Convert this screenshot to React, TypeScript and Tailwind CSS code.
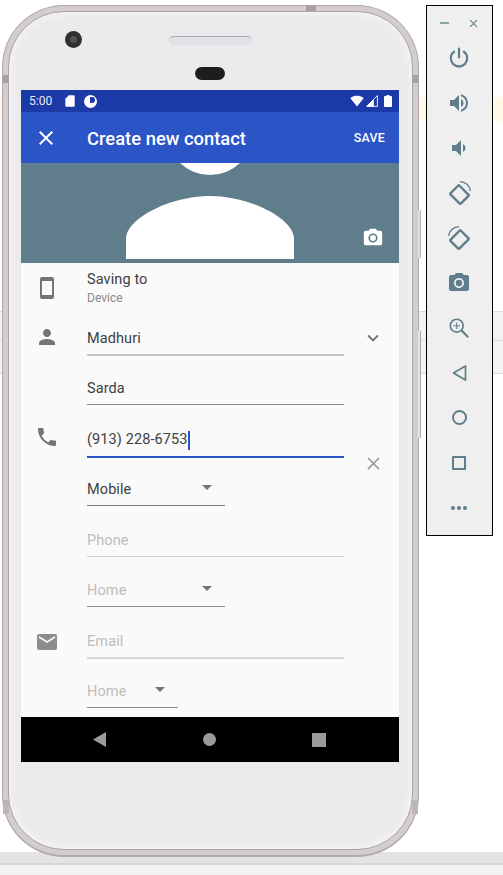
import type { ReactNode } from "react";

const paths = {
  close: "M19 6.41L17.59 5 12 10.59 6.41 5 5 6.41 10.59 12 5 17.59 6.41 19 12 13.41 17.59 19 19 17.59 13.41 12z",
  camera:
    "M9 2L7.17 4H4c-1.1 0-2 .9-2 2v12c0 1.1.9 2 2 2h16c1.1 0 2-.9 2-2V6c0-1.1-.9-2-2-2h-3.17L15 2H9zm3 15c-2.76 0-5-2.24-5-5s2.24-5 5-5 5 2.24 5 5-2.24 5-5 5zm0-8.2a3.2 3.2 0 1 0 0 6.4 3.2 3.2 0 0 0 0-6.4z",
  person: "M12 12c2.21 0 4-1.79 4-4s-1.79-4-4-4-4 1.79-4 4 1.79 4 4 4zm0 2c-2.67 0-8 1.34-8 4v2h16v-2c0-2.66-5.33-4-8-4z",
  phone:
    "M6.62 10.79c1.44 2.83 3.76 5.14 6.59 6.59l2.2-2.2c.27-.27.67-.36 1.02-.24 1.12.37 2.33.57 3.57.57.55 0 1 .45 1 1V20c0 .55-.45 1-1 1-9.39 0-17-7.61-17-17 0-.55.45-1 1-1h3.5c.55 0 1 .45 1 1 0 1.25.2 2.45.57 3.57.11.35.03.74-.25 1.02l-2.2 2.2z",
  email: "M20 4H4c-1.1 0-1.99.9-1.99 2L2 18c0 1.1.9 2 2 2h16c1.1 0 2-.9 2-2V6c0-1.1-.9-2-2-2zm0 4l-8 5-8-5V6l8 5 8-5v2z",
  smartphone: "M17 1.01L7 1c-1.1 0-2 .9-2 2v18c0 1.1.9 2 2 2h10c1.1 0 2-.9 2-2V3c0-1.1-.9-1.99-2-1.99zM17 19H7V5h10v14z",
  expand: "M16.59 8.59L12 13.17 7.41 8.59 6 10l6 6 6-6z",
  volumeUp:
    "M3 9v6h4l5 5V4L7 9H3zm13.5 3c0-1.77-1.02-3.29-2.5-4.03v8.05c1.48-.73 2.5-2.25 2.5-4.02zM14 3.23v2.06c2.89.86 5 3.54 5 6.71s-2.11 5.85-5 6.71v2.06c4.01-.91 7-4.49 7-8.77s-2.99-7.86-7-8.77z",
  volumeDown: "M18.5 12c0-1.77-1.02-3.29-2.5-4.03v8.05c1.48-.73 2.5-2.25 2.5-4.02zM5 9v6h4l5 5V4L9 9H5z",
  wifi: "M12.01 21.49L23.64 7c-.45-.34-4.93-4-11.64-4C5.28 3 .81 6.66.36 7l11.64 14.49.01.01z",
  sd: "M18 2h-8L4.02 8 4 20c0 1.1.9 2 2 2h12c1.1 0 2-.9 2-2V4c0-1.1-.9-2-2-2z",
};

function Icon({ d, className }: { d: string; className?: string }) {
  return (
    <svg viewBox="0 0 24 24" className={className} fill="currentColor">
      <path d={d} />
    </svg>
  );
}

function Caret() {
  return (
    <svg viewBox="0 0 10 5" className="w-[10px] h-[5px] text-[#757575]" fill="currentColor">
      <path d="M0 0h10L5 5z" />
    </svg>
  );
}

type FieldProps = {
  rowClass: string;
  text: string;
  textClass?: string;
  lineClass: string;
  icon?: ReactNode;
  right?: ReactNode;
  caret?: string;
  cursor?: boolean;
};

function Field({ rowClass, text, textClass = "text-[#404040]", lineClass, icon, right, caret, cursor }: FieldProps) {
  return (
    <div className={`flex items-end ${rowClass}`}>
      <div className="w-[66px] pl-[13.5px] shrink-0">{icon}</div>
      <div className="w-[257px] shrink-0">
        <div className={lineClass}>
          <div className={`flex items-center h-[24px] text-[14.5px] tracking-[0.1px] ${cursor ? "mb-[4px]" : "mb-[3px]"}`}>
            <span className={textClass}>{text}</span>
            {cursor && <span className="w-[2px] h-[19px] bg-[#2b54c7] ml-[0.5px]" />}
            {caret && (
              <span className={`ml-auto mb-[6px] flex ${caret}`}>
                <Caret />
              </span>
            )}
          </div>
        </div>
      </div>
      <div className="flex-1 pl-[18px]">{right}</div>
    </div>
  );
}

function PanelButton({ children }: { children: ReactNode }) {
  return <div className="h-[45px] flex items-center justify-center pr-[1px] text-[#607d8b]">{children}</div>;
}

function SidePanel() {
  return (
    <div className="absolute left-[426px] top-[5px] w-[67px] h-[531px] bg-[#efefef] border border-black">
      <div className="flex items-center h-[34px] mb-[-5px] pl-[13px] gap-[18px]">
        <div className="w-[9px] h-[2px] bg-[#90a4ae]" />
        <Icon d={paths.close} className="w-[13px] h-[13px] text-[#607d8b]" />
      </div>
      <div>
        <PanelButton>
          <svg viewBox="0 0 24 24" className="w-[24px] h-[24px]" fill="none" stroke="currentColor" strokeWidth="2.2" strokeLinecap="round">
            <path d="M12 2.5v9" />
            <path d="M7.2 5.6a8.2 8.2 0 1 0 9.6 0" />
          </svg>
        </PanelButton>
        <PanelButton>
          <Icon d={paths.volumeUp} className="w-[24px] h-[24px]" />
        </PanelButton>
        <PanelButton>
          <Icon d={paths.volumeDown} className="w-[24px] h-[24px]" />
        </PanelButton>
        <PanelButton>
          <svg viewBox="0 0 24 24" className="w-[25px] h-[25px]" fill="none" stroke="currentColor">
            <rect x="6" y="7" width="12" height="14" rx="1" strokeWidth="2.3" transform="rotate(-45 12 14)" />
            <path d="M12.5 1.5a10.5 10.5 0 0 1 10 9" strokeWidth="1.3" />
          </svg>
        </PanelButton>
        <PanelButton>
          <svg viewBox="0 0 24 24" className="w-[25px] h-[25px]" fill="none" stroke="currentColor">
            <rect x="6" y="7" width="12" height="14" rx="1" strokeWidth="2.3" transform="rotate(45 12 14)" />
            <path d="M11.5 1.5a10.5 10.5 0 0 0-10 9" strokeWidth="1.3" />
          </svg>
        </PanelButton>
        <PanelButton>
          <Icon d={paths.camera} className="w-[24px] h-[24px]" />
        </PanelButton>
        <PanelButton>
          <svg viewBox="0 0 24 24" className="w-[22px] h-[22px]" fill="none" stroke="currentColor" strokeWidth="1.8">
            <circle cx="9.5" cy="9.5" r="7" />
            <path d="M9.5 6v7M6 9.5h7" strokeWidth="1.2" />
            <path d="M14.8 14.8L22 22" strokeWidth="2.2" />
          </svg>
        </PanelButton>
        <PanelButton>
          <svg viewBox="0 0 24 24" className="w-[24px] h-[24px]" fill="none" stroke="currentColor" strokeWidth="1.7">
            <path d="M18.5 5v14L6.5 12z" strokeLinejoin="round" />
          </svg>
        </PanelButton>
        <PanelButton>
          <div className="w-[15px] h-[15px] rounded-full border-2 border-[#607d8b]" />
        </PanelButton>
        <PanelButton>
          <div className="w-[14px] h-[14px] rounded-[1px] border-2 border-[#607d8b]" />
        </PanelButton>
        <PanelButton>
          <div className="flex gap-[2px]">
            <div className="w-[4px] h-[4px] rounded-full bg-[#607d8b]" />
            <div className="w-[4px] h-[4px] rounded-full bg-[#607d8b]" />
            <div className="w-[4px] h-[4px] rounded-full bg-[#607d8b]" />
          </div>
        </PanelButton>
      </div>
    </div>
  );
}

function StatusBar() {
  return (
    <div className="h-[22px] bg-[#1c39a8] flex items-center pl-[8px] pr-[7px] text-white shrink-0">
      <span className="text-[12px] w-[34px] text-[#e8ebf7]">5:00</span>
      <Icon d={paths.sd} className="w-[14px] h-[14px]" />
      <div className="ml-[7px] w-[13px] h-[13px] rounded-full bg-white flex items-center justify-center">
        <div className="w-[5px] h-[6px] bg-[#1c39a8] rounded-r-[3px] ml-[3px] mb-[3px]" />
      </div>
      <div className="ml-auto flex items-center">
        <svg viewBox="0 2 24 20" className="w-[14px] h-[12px]" fill="white">
          <path d={paths.wifi} />
        </svg>
        <svg viewBox="0 0 20 20" className="w-[12px] h-[12px] ml-[2px]" fill="none">
          <path d="M1 19h18V1z" stroke="white" strokeWidth="1.5" />
          <path d="M1 19h12V7z" fill="white" />
        </svg>
        <svg viewBox="0 0 8 12" className="w-[8px] h-[12px] ml-[6px]" fill="white">
          <path d="M2.5 0h3v1H7a1 1 0 0 1 1 1v9a1 1 0 0 1-1 1H1a1 1 0 0 1-1-1V2a1 1 0 0 1 1-1h1.5z" />
        </svg>
      </div>
    </div>
  );
}

function Toolbar() {
  return (
    <div className="h-[51px] bg-[#2b54c7] flex items-center text-white shrink-0">
      <Icon d={paths.close} className="w-[24px] h-[24px] ml-[13px]" />
      <div className="ml-[29px] pt-[2px] text-[18.4px] font-medium">Create new contact</div>
      <div className="ml-auto mr-[14px] pt-[2px] text-[12.4px] font-medium tracking-[0.25px]">SAVE</div>
    </div>
  );
}

function Hero() {
  return (
    <div className="relative h-[100px] bg-[#607d8b] shrink-0">
      <svg viewBox="0 0 378 100" className="block w-[378px] h-[100px]" fill="white">
        <circle cx="189" cy="-31.5" r="43.5" />
        <path d="M105 96V76C105 55 150 33 189 33C228 33 273 55 273 76V96Z" />
      </svg>
      <Icon d={paths.camera} className="absolute right-[15px] bottom-[14px] w-[22px] h-[22px] text-white" />
    </div>
  );
}

function Form() {
  const placeholder = "text-[#bdbdbd]";
  return (
    <div className="flex-1 bg-[#fafafa] overflow-hidden">
      <div className="h-[42px] flex">
        <div className="w-[66px] pl-[13.5px] pt-[13px] shrink-0">
          <Icon d={paths.smartphone} className="w-[24px] h-[24px] text-[#757575]" />
        </div>
        <div className="pt-[7px]">
          <div className="text-[14.5px] leading-[19px] text-[#404040] tracking-[0.1px]">Saving to</div>
          <div className="text-[12px] leading-[18px] text-[#8a8a8a]">Device</div>
        </div>
      </div>
      <Field
        rowClass="h-[51px]"
        text="Madhuri"
        lineClass="border-b-2 border-[#c6c6c6]"
        icon={<Icon d={paths.person} className="w-[24px] h-[24px] mb-[7px] text-[#757575]" />}
        right={<Icon d={paths.expand} className="w-[22px] h-[22px] mb-[7px] text-[#757575]" />}
      />
      <Field rowClass="h-[49px]" text="Sarda" lineClass="border-b border-[#8a8a8a]" />
      <Field
        rowClass="h-[53px]"
        text="(913) 228-6753"
        lineClass="border-b-2 border-[#2b54c7]"
        cursor
        icon={<Icon d={paths.phone} className="w-[24px] h-[24px] mb-[9px] text-[#757575]" />}
      />
      <div className="flex items-start">
        <div className="w-[323px] shrink-0">
          <Field rowClass="h-[48px]" text="Mobile" lineClass="w-[138px] border-b border-[#777777]" caret="mr-[13px]" />
        </div>
        <div className="pl-[18.5px] mt-[-5.5px]">
          <Icon d={paths.close} className="w-[21px] h-[21px] text-[#9e9e9e]" />
        </div>
      </div>
      <Field rowClass="h-[51px]" text="Phone" textClass={placeholder} lineClass="border-b border-[#cfcfcf]" />
      <Field rowClass="h-[50px]" text="Home" textClass={placeholder} lineClass="w-[138px] border-b border-[#8a8a8a]" caret="mr-[13px]" />
      <Field
        rowClass="h-[52px]"
        text="Email"
        textClass={placeholder}
        lineClass="border-b-2 border-[#d6d6d6]"
        icon={<Icon d={paths.email} className="w-[24px] h-[24px] mb-[5px] text-[#8c8c8c]" />}
      />
      <Field rowClass="h-[49px]" text="Home" textClass={placeholder} lineClass="w-[91px] border-b border-[#8a8a8a]" caret="mr-[13px]" />
    </div>
  );
}

function NavBar() {
  return (
    <div className="h-[45px] bg-black flex items-center pl-[72px] shrink-0">
      <svg viewBox="0 0 13 15" className="w-[13px] h-[15px] text-[#9a9a9a]" fill="currentColor">
        <path d="M13 0v15L0 7.5z" />
      </svg>
      <div className="ml-[97px] w-[13px] h-[13px] rounded-full bg-[#9a9a9a]" />
      <div className="ml-[96px] w-[14px] h-[14px] bg-[#9a9a9a]" />
    </div>
  );
}

function Phone() {
  return (
    <div className="absolute left-[2px] top-[5px] w-[417px] h-[852px] rounded-[62px] bg-[#d4cdd0] border border-b-2 border-[#b0a8ac] p-[5px]">
      {/* metal seams and side keys sit on the frame */}
      <div className="absolute left-0 top-[69px] w-[6px] h-[8px] bg-[#a8a0a4]" />
      <div className="absolute right-0 top-[69px] w-[6px] h-[8px] bg-[#a8a0a4]" />
      <div className="absolute left-0 top-[794px] w-[6px] h-[14px] bg-[#bdb6b9]" />
      <div className="absolute right-0 top-[794px] w-[6px] h-[14px] bg-[#bdb6b9]" />
      <div className="absolute left-[303px] top-0 w-[10px] h-[5px] bg-[#a8a0a4]" />
      <div className="absolute left-[415px] top-[204px] w-[3px] h-[48px] bg-[#dedede] border-r border-[#b4b4b4]" />
      <div className="absolute left-[415px] top-[325px] w-[3px] h-[107px] bg-[#e4e4e4] border-r border-[#a8a8a8]" />
      <div className="w-full h-full rounded-[56px] bg-[#ebebed] border border-[#aaa2a6] shadow-[inset_0_0_10px_#fafafb] flex flex-col items-center">
        <div className="relative w-full h-[78px] shrink-0">
          <div className="absolute left-[56px] top-[19px] w-[17px] h-[17px] rounded-full bg-[#303032] flex items-center justify-center">
            <div className="w-[7px] h-[7px] rounded-full bg-[#55524a]" />
          </div>
          <div className="absolute left-[160px] top-[24px] w-[83px] h-[9px] rounded-full bg-[#e2e2e6] border-t border-[#a9a9ae]" />
          <div className="absolute left-[186px] top-[55px] w-[30px] h-[13px] rounded-full bg-[#1d1d1f]" />
        </div>
        <div className="w-[378px] h-[672px] flex flex-col overflow-hidden ml-[-1px]">
          <StatusBar />
          <Toolbar />
          <Hero />
          <Form />
          <NavBar />
        </div>
      </div>
    </div>
  );
}

export default function App() {
  return (
    <div
      className="relative w-[503px] h-[875px] overflow-hidden bg-white flex flex-col"
      style={{ fontFamily: "Roboto, sans-serif" }}
    >
      <div className="h-[97px] shrink-0" />
      <div className="h-[24px] bg-[#fff9e6] shrink-0" />
      <div className="h-[190px] shrink-0" />
      <div className="h-[29px] bg-[#f3f3f3] border-t border-[#dcdcdc] shrink-0" />
      <div className="h-[34px] bg-[#f3f3f3] border-y border-[#dcdcdc] shrink-0" />
      <div className="flex-1" />
      <div className="h-[11px] bg-[#e4e4e4] shrink-0" />
      <div className="h-[2px] bg-[#d6d6d6] shrink-0" />
      <div className="h-[10px] bg-[#f2f2f2] shrink-0" />
      <Phone />
      <SidePanel />
    </div>
  );
}
